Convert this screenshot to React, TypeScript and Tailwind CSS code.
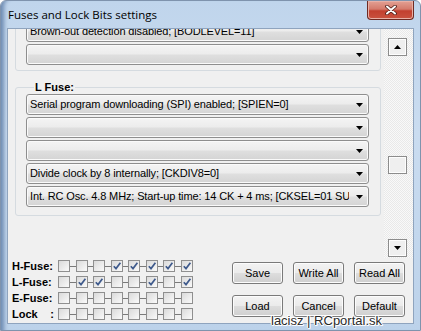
import React from 'react';

const hFuse = ['', '', 'Brown-out detection disabled; [BODLEVEL=11]', ''];

const lFuse = [
  'Serial program downloading (SPI) enabled; [SPIEN=0]',
  '',
  '',
  'Divide clock by 8 internally; [CKDIV8=0]',
  'Int. RC Osc. 4.8 MHz; Start-up time: 14 CK + 4 ms; [CKSEL=01 SUT=10]',
];

const bits: { label: string; checks: boolean[] }[] = [
  { label: 'H-Fuse:', checks: [false, false, false, true, true, true, true, true] },
  { label: 'L-Fuse:', checks: [false, true, true, false, false, true, false, true] },
  { label: 'E-Fuse:', checks: [false, false, false, false, false, false, false, false] },
  { label: 'Lock', checks: [false, false, false, false, false, false, false, false] },
];

const Arrow = ({ up = false }: { up?: boolean }) => (
  <svg width="7" height="4" viewBox="0 0 7 4">
    <path d={up ? 'M0 4h7L3.5 0z' : 'M0 0h7L3.5 4z'} fill="#000" />
  </svg>
);

const Combo = ({ text }: { text: string }) => (
  <div className="flex h-[21px] w-[343px] items-center rounded-[3px] border border-[#8e8e8e] bg-[linear-gradient(#f4f4f4_0%,#ececec_48%,#dfdfdf_52%,#d4d4d4_100%)] pl-[3px] pr-[5px] shadow-[inset_0_0_0_1px_#fafafa]">
    <span className="flex-1 overflow-hidden whitespace-nowrap text-[11px] leading-[13px] tracking-[-0.13px] text-black">{text}</span>
    <span className="ml-[7px] flex">
      <Arrow />
    </span>
  </div>
);

const GroupBox = ({ title, items, bottom }: { title: string; items: string[]; bottom: string }) => (
  <fieldset className={`ml-[7px] w-[366px] rounded-[3px] border border-[#d5dbe0] pl-[10px] ${bottom}`}>
    <legend className="ml-[8px] px-px text-[11px] font-bold leading-[14px] text-black">{title}</legend>
    <div className="flex flex-col gap-[2px]">
      {items.map((t, i) => (
        <Combo key={i} text={t} />
      ))}
    </div>
  </fieldset>
);

const Check = ({ on }: { on: boolean }) => (
  <div className="flex h-[12px] w-[12px] items-center justify-center border border-[#8f8f8f] bg-[linear-gradient(135deg,#dadada,#fafafa)]">
    {on && (
      <svg width="10" height="10" viewBox="0 0 10 10">
        <path d="M1.8 5.2 L4 7.6 L8.4 1.8" fill="none" stroke="#3f5a8c" strokeWidth="1.7" />
      </svg>
    )}
  </div>
);

const Btn = ({ children }: { children: React.ReactNode }) => (
  <button className="flex h-[22px] w-[51px] items-center justify-center rounded-[3px] border border-[#7a7a7a] bg-[linear-gradient(#f3f3f3_0%,#ebebeb_48%,#dddddd_52%,#cfcfcf_100%)] text-[11px] text-black shadow-[inset_0_0_0_1px_#fcfcfc]">
    {children}
  </button>
);

const ScrollBtn = ({ children, className }: { children?: React.ReactNode; className: string }) => (
  <div className={`flex h-[18px] w-[19px] items-center justify-center border border-[#8c8c8c] bg-[#efefef] shadow-[inset_0_0_0_1px_#fdfdfd] ${className}`}>
    {children}
  </div>
);

export default function App() {
  return (
    <div className="relative h-[331px] w-[421px] overflow-hidden bg-white font-['Liberation_Sans',Arial,sans-serif]">
      <div className="flex h-full w-full flex-col rounded-t-[6px] border border-[#7f93ad] bg-[linear-gradient(180deg,#c0d5ec,#cadcf0_40%,#bcd2ea)] shadow-[inset_7px_0_4px_-4px_#6d8bb2]">
        {/* title bar */}
        <div className="flex h-[27px] items-start">
          <span className="ml-[7px] mt-[6px] font-['Open_Sans',sans-serif] text-[11.5px] leading-[16px] text-black">
            Fuses and Lock Bits settings
          </span>
          <div className="ml-auto mr-[6px] flex h-[19px] w-[47px] items-center justify-center rounded-b-[4px] border border-t-0 border-[#6e2a22] bg-[linear-gradient(#e3a194_0%,#d47a6b_45%,#c2402f_55%,#c9523f_100%)] shadow-[inset_0_0_0_1px_#e8b0a6]">
            <svg width="12" height="10" viewBox="0 0 12 10">
              <path d="M2 1.5 L10 8.5 M10 1.5 L2 8.5" stroke="#4a1c16" strokeWidth="3.6" strokeLinecap="round" />
              <path d="M2 1.5 L10 8.5 M10 1.5 L2 8.5" stroke="#ffffff" strokeWidth="2" strokeLinecap="round" />
            </svg>
          </div>
        </div>

        {/* client area */}
        <div className="mx-[6px] mb-[6px] flex flex-1 flex-col border border-[#8fa4be] bg-[#f0f0f0]">
          {/* scroll region */}
          <div className="flex h-[229px]">
            <div className="w-[376px] overflow-hidden">
              <div className="-mt-[68px]">
                <GroupBox title="H Fuse:" items={hFuse} bottom="pb-[5px]" />
                <div className="mt-[9px]">
                  <GroupBox title="L Fuse:" items={lFuse} bottom="pb-[8px]" />
                </div>
              </div>
            </div>
            <div className="flex w-[29px] flex-col bg-[image:repeating-conic-gradient(#e9e9e9_0%_25%,#f9f9f9_0%_50%)] bg-[length:2px_2px] pl-[4px]">
              <ScrollBtn className="mt-[9px]">
                <Arrow up />
              </ScrollBtn>
              <ScrollBtn className="mt-[100px]" />
              <ScrollBtn className="mb-[1px] mt-auto">
                <Arrow />
              </ScrollBtn>
            </div>
          </div>

          {/* bottom section */}
          <div className="flex flex-1 justify-between">
            <div className="flex flex-col pl-[4px]">
              {bits.map((row) => (
                <div key={row.label} className="flex h-[16px] items-center">
                  <div className="flex w-[46px] pr-[4px] text-[11px] font-bold leading-[13px] text-black">
                    {row.label === 'Lock' ? (
                      <span className="flex w-full justify-between">
                        <span>Lock</span>
                        <span>:</span>
                      </span>
                    ) : (
                      row.label
                    )}
                  </div>
                  <div className="flex items-center">
                    {row.checks.map((c, i) => (
                      <React.Fragment key={i}>
                        {i > 0 && <span className="h-px w-[5.5px] bg-[#7a7a7a]" />}
                        <Check on={c} />
                      </React.Fragment>
                    ))}
                  </div>
                </div>
              ))}
            </div>
            <div className="mr-[8px] mt-[4px] grid h-fit grid-cols-3 gap-x-[10px] gap-y-[11px]">
              <Btn>Save</Btn>
              <Btn>Write All</Btn>
              <Btn>Read All</Btn>
              <Btn>Load</Btn>
              <Btn>Cancel</Btn>
              <Btn>Default</Btn>
            </div>
          </div>
        </div>
      </div>

      {/* watermark */}
      <div className="absolute left-[271px] top-[313px] text-[13px] leading-[15px] text-[#2a2a2a] [text-shadow:1px_0_#fff,-1px_0_#fff,0_1px_#fff,0_-1px_#fff,1px_1px_#fff,-1px_-1px_#fff]">
        lacisz | RCportal.sk
      </div>
    </div>
  );
}
